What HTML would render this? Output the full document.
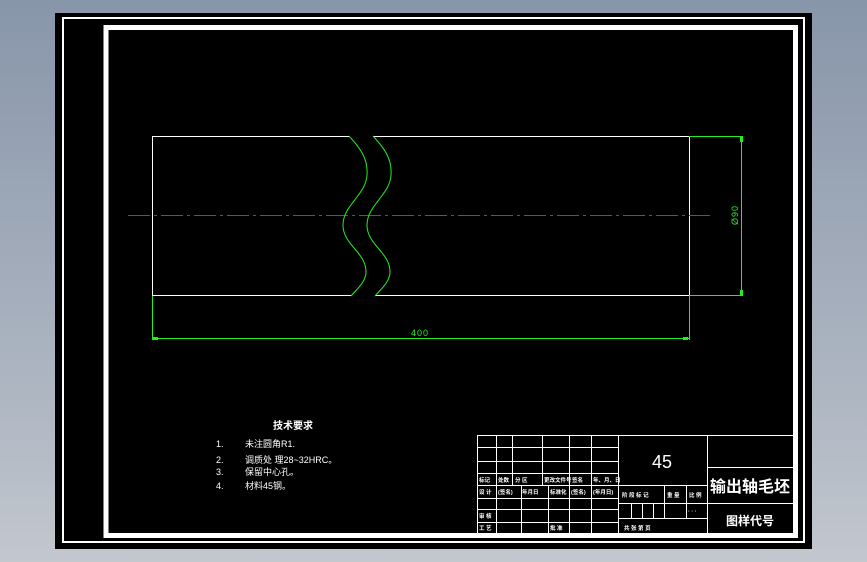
<!DOCTYPE html>
<html><head><meta charset="utf-8"><style>
html,body{margin:0;padding:0;width:867px;height:562px;overflow:hidden;background:linear-gradient(#8896aa,#aeb6c2 70%,#c3c7ce);}
svg{position:absolute;left:0;top:0}
text{font-family:"Liberation Sans","Noto Sans CJK SC",sans-serif;fill:#fff}
</style></head><body>
<svg width="867" height="562" viewBox="0 0 867 562">
<rect x="55" y="13" width="757" height="536" fill="#000"/>
<rect x="63" y="18" width="741" height="524" fill="none" stroke="#fff" stroke-width="2"/>
<rect x="106" y="27.5" width="689.5" height="508" fill="none" stroke="#fff" stroke-width="5"/>
<!-- shaft -->
<g stroke="#fff" stroke-width="1" fill="none">
<line x1="152" y1="136.5" x2="349" y2="136.5"/><line x1="373" y1="136.5" x2="689" y2="136.5"/>
<line x1="152" y1="295.5" x2="351" y2="295.5"/><line x1="375" y1="295.5" x2="689" y2="295.5"/>
<line x1="152.5" y1="136" x2="152.5" y2="296"/><line x1="689.5" y1="136" x2="689.5" y2="296"/>
</g>
<line x1="128" y1="215.5" x2="710" y2="215.5" stroke="#e02020" stroke-width="1" stroke-dasharray="22,4,3,4"/>
<g stroke="#22ee22" stroke-width="1" fill="none">
<path d="M349,136 C362,150 368,160 367,175 C366,195 343,205 343,225 C343,245 366,252 366,272 C366,282 356,290 351,296"/>
<path d="M373,136 C386,150 392,160 391,175 C390,195 367,205 367,225 C367,245 390,252 390,272 C390,282 380,290 375,296"/>
<line x1="689" y1="136.5" x2="743" y2="136.5"/><line x1="689" y1="295.5" x2="743" y2="295.5"/>
<line x1="741.5" y1="136" x2="741.5" y2="296"/>
<line x1="689.5" y1="296" x2="689.5" y2="340"/><line x1="152.5" y1="296" x2="152.5" y2="340"/>
<line x1="152" y1="338.5" x2="690" y2="338.5"/>
</g>
<g fill="#22ee22"><rect x="740" y="137" width="3" height="5"/><rect x="740" y="290" width="3" height="5"/><rect x="153" y="337" width="5" height="3"/><rect x="683" y="337" width="5" height="3"/></g>
<text x="420" y="336" font-size="9" text-anchor="middle" style="fill:#22ee22;letter-spacing:1px">400</text>
<text transform="translate(738,215) rotate(-90)" font-size="9" text-anchor="middle" style="fill:#22ee22;letter-spacing:1px">Ø90</text>
<!-- tech requirements -->
<text x="293" y="429" font-size="10" font-weight="bold" text-anchor="middle">技术要求</text>
<g font-size="9">
<text x="216" y="447">1.</text><text x="245" y="447">未注圆角R1.</text>
<text x="216" y="463">2.</text><text x="245" y="463">调质处 理28~32HRC。</text>
<text x="216" y="475">3.</text><text x="245" y="475">保留中心孔。</text>
<text x="216" y="489">4.</text><text x="245" y="489">材料45钢。</text>
</g>
<!-- title block -->
<g stroke="#fff" stroke-width="1" fill="none">
<rect x="477.5" y="435.5" width="316" height="98"/>
<line x1="477" y1="447.5" x2="618" y2="447.5"/><line x1="477" y1="461.5" x2="618" y2="461.5"/>
<line x1="477" y1="473.5" x2="618" y2="473.5"/><line x1="477" y1="485.5" x2="707" y2="485.5"/>
<line x1="477" y1="498.5" x2="618" y2="498.5"/><line x1="477" y1="509.5" x2="618" y2="509.5"/>
<line x1="477" y1="522.5" x2="618" y2="522.5"/>
<line x1="496.5" y1="435" x2="496.5" y2="533"/>
<line x1="512.5" y1="435" x2="512.5" y2="485"/><line x1="542.5" y1="435" x2="542.5" y2="485"/>
<line x1="569.5" y1="435" x2="569.5" y2="533"/><line x1="591.5" y1="435" x2="591.5" y2="533"/>
<line x1="521.5" y1="485" x2="521.5" y2="533"/><line x1="548.5" y1="485" x2="548.5" y2="533"/>
<line x1="618.5" y1="435" x2="618.5" y2="533"/><line x1="707.5" y1="435" x2="707.5" y2="533"/>
<line x1="618" y1="503.5" x2="707" y2="503.5"/><line x1="618" y1="518.5" x2="707" y2="518.5"/>
<line x1="631.5" y1="503" x2="631.5" y2="518"/><line x1="642.5" y1="503" x2="642.5" y2="518"/>
<line x1="653.5" y1="503" x2="653.5" y2="518"/><line x1="664.5" y1="485" x2="664.5" y2="518"/>
<line x1="686.5" y1="485" x2="686.5" y2="518"/>
<line x1="707" y1="467.5" x2="794" y2="467.5"/><line x1="707" y1="503.5" x2="794" y2="503.5"/>
</g>
<text x="662" y="468" font-size="18" text-anchor="middle">45</text>
<text x="750" y="492" font-size="16" font-weight="bold" text-anchor="middle">输出轴毛坯</text>
<text x="750" y="525" font-size="12" font-weight="bold" text-anchor="middle">图样代号</text>
<g font-size="5.5" font-weight="bold">
<text x="479" y="482">标记</text><text x="498" y="482">处数</text><text x="515" y="482">分 区</text><text x="544" y="482">更改文件号</text><text x="572" y="482">签名</text><text x="593" y="482">年、月、日</text>
<text x="479" y="494">设 计</text><text x="498" y="494">(签名)</text><text x="522" y="494">年月日</text><text x="550" y="494">标准化</text><text x="571" y="494">(签名)</text><text x="593" y="494">(年月日)</text>
<text x="622" y="497">阶 段 标 记</text><text x="667" y="497">重 量</text><text x="689" y="497">比 例</text>
<text x="479" y="518">审 核</text><text x="479" y="530">工 艺</text><text x="550" y="530">批 准</text>
<text x="624" y="530">共     张     第     页</text>
<text x="688" y="513">· · ·</text>
</g>
</svg>
</body></html>
